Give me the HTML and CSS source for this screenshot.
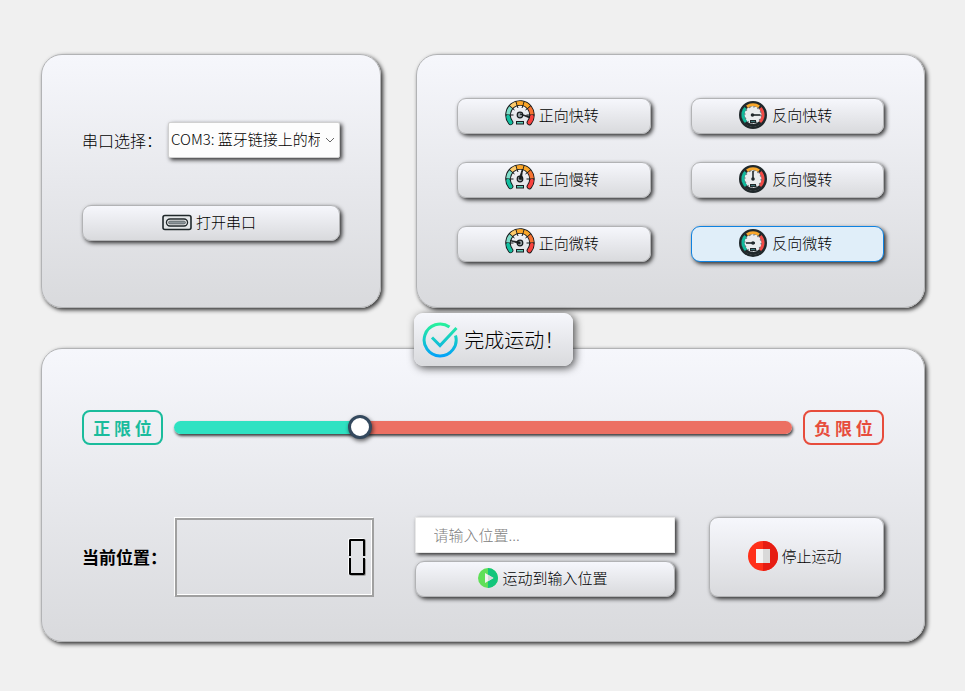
FILE: index.html
```html
<!DOCTYPE html>
<html lang="zh-CN">
<head>
<meta charset="utf-8">
<title>运动控制</title>
<link rel="stylesheet" href="styles.css">
</head>
<body>
<svg class="defs" aria-hidden="true">
  <defs>
    <g id="arc-gauge" fill="none">
      <circle cx="15" cy="15" r="12" pathLength="360" stroke="#161a1c" stroke-width="5.600" stroke-linecap="round" stroke-dasharray="256 104" transform="rotate(142 15 15)"/>
      <g transform="rotate(142 15 15)" stroke-width="3.800">
        <circle cx="15" cy="15" r="12" pathLength="360" stroke="#12bfa0" stroke-linecap="round" stroke-dasharray="30 330"/>
        <circle cx="15" cy="15" r="12" pathLength="360" stroke="#f8413e" stroke-linecap="round" stroke-dasharray="30 330" stroke-dashoffset="-226"/>
        <circle cx="15" cy="15" r="12" pathLength="360" stroke="#7edcc9" stroke-dasharray="36 324" stroke-dashoffset="-41"/>
        <circle cx="15" cy="15" r="12" pathLength="360" stroke="#fdca6b" stroke-dasharray="28 332" stroke-dashoffset="-81"/>
        <circle cx="15" cy="15" r="12" pathLength="360" stroke="#fba628" stroke-dasharray="30 330" stroke-dashoffset="-113"/>
        <circle cx="15" cy="15" r="12" pathLength="360" stroke="#fba628" stroke-dasharray="28 332" stroke-dashoffset="-147"/>
        <circle cx="15" cy="15" r="12" pathLength="360" stroke="#f67332" stroke-dasharray="36 324" stroke-dashoffset="-179"/>
      </g>
      <path d="M5 15h3.500M7.500 8.500l2 1.500M12 5.500l1 2.500M18 5.500l-1 2.500M22.500 8.500l-2 1.500M25 15h-3.500" stroke="#161a1c"/>
      <circle cx="15" cy="15" r="2.800" fill="#9aa3a7" stroke="#161a1c" stroke-width="1.200"/>
      <rect x="11.500" y="21.500" width="7" height="2.500" fill="#5fc9b5" stroke="#161a1c"/>
    </g>
    <g id="dial-gauge" fill="none">
      <circle cx="15" cy="15" r="12.800" fill="#e9ecee" stroke="#20282b" stroke-width="2.400"/>
      <circle cx="15" cy="15" r="10.400" stroke="#20282b" stroke-width="3"/>
      <path d="M8 22A10.200 10.200 0 0 1 7.600 8" stroke="#12b99c" stroke-width="3"/>
      <path d="M9 6.700A10.200 10.200 0 0 1 21 6.700" stroke="#f8a72c" stroke-width="3"/>
      <path d="M22.400 8A10.200 10.200 0 0 1 22 22" stroke="#f14b46" stroke-width="3"/>
      <circle cx="15" cy="15" r="8.200" stroke="#6b777c" stroke-width="1.300" stroke-dasharray="1.500 2.794"/>
      <rect x="12.500" y="20.500" width="5" height="2" fill="#3f777a" stroke="#20282b"/>
    </g>
    <linearGradient id="check-fill" x1="0" y1="0" x2="0" y2="36" gradientUnits="userSpaceOnUse">
      <stop offset="0" stop-color="#2af598"/>
      <stop offset="1" stop-color="#009efd"/>
    </linearGradient>
  </defs>
</svg>

<main class="page">
  <section class="panel port-panel">
    <div class="port-row">
      <label for="port">串口选择：</label>
      <div class="select-box">
        <select id="port"><option>COM3: 蓝牙链接上的标准串行</option></select>
        <svg class="chevron" viewBox="0 0 10 6" aria-hidden="true"><path d="M1 1l4 4 4-4" fill="none" stroke="#666"/></svg>
      </div>
    </div>
    <button class="btn" type="button">
      <svg class="icon" viewBox="0 0 30 30" aria-hidden="true">
        <rect x="1" y="8.500" width="28" height="14" rx="2" fill="#e4e7e9" stroke="#20282b" stroke-width="1.600"/>
        <rect x="4.500" y="12" width="21" height="7" rx="3.500" fill="#fff" stroke="#20282b" stroke-width="1.400"/>
        <rect x="6.500" y="14" width="17" height="3" rx="1.500" fill="#8b9498" stroke="#555e62" stroke-width=".8"/>
      </svg>
      <span>打开串口</span>
    </button>
  </section>

  <section class="panel turn-panel">
    <button class="btn" type="button"><svg class="icon" viewBox="0 0 30 30" aria-hidden="true"><use href="#arc-gauge"/><path d="M15 14l9.500 2.500v1.500z" fill="#161a1c" stroke="#161a1c" stroke-width=".8"/></svg><span>正向快转</span></button>
    <button class="btn" type="button"><svg class="icon" viewBox="0 0 30 30" aria-hidden="true"><use href="#dial-gauge"/><path d="M13 15h9.500" stroke="#20282b" stroke-width="1.600"/><circle cx="14.500" cy="15" r="1.800" fill="#20282b"/></svg><span>反向快转</span></button>
    <button class="btn" type="button"><svg class="icon" viewBox="0 0 30 30" aria-hidden="true"><use href="#arc-gauge"/><path d="M14 15l3.500-10-1 10.500z" fill="#161a1c" stroke="#161a1c" stroke-width=".8"/></svg><span>正向慢转</span></button>
    <button class="btn" type="button"><svg class="icon" viewBox="0 0 30 30" aria-hidden="true"><use href="#dial-gauge"/><path d="M15 16V7" stroke="#20282b" stroke-width="1.600"/><circle cx="15" cy="15" r="1.800" fill="#20282b"/></svg><span>反向慢转</span></button>
    <button class="btn" type="button"><svg class="icon" viewBox="0 0 30 30" aria-hidden="true"><use href="#arc-gauge"/><path d="M15 14L5 12.500l10 3.500z" fill="#161a1c" stroke="#161a1c" stroke-width=".8"/></svg><span>正向微转</span></button>
    <button class="btn btn-active" type="button"><svg class="icon" viewBox="0 0 30 30" aria-hidden="true"><use href="#dial-gauge"/><path d="M17 15H8" stroke="#20282b" stroke-width="1.600"/><circle cx="15" cy="15" r="1.800" fill="#20282b"/></svg><span>反向微转</span></button>
  </section>

  <section class="panel motion-panel">
    <div class="toast" role="status">
      <svg class="toast-icon" viewBox="0 0 36 36" aria-hidden="true">
        <g fill="none" stroke="url(#check-fill)" stroke-width="3">
          <path d="M33.500 13.500A16 16 0 1 1 27.500 5"/>
          <path d="M10 15.500l8 8L34.500 6"/>
        </g>
      </svg>
      <span>完成运动！</span>
    </div>

    <div class="limit-row">
      <span class="limit limit-positive">正 限 位</span>
      <input class="slider" type="range" min="0" max="1000" value="293" aria-label="位置">
      <span class="limit limit-negative">负 限 位</span>
    </div>

    <div class="position-row">
      <div class="current">
        <span class="current-label">当前位置：</span>
        <output class="lcd" aria-label="0">
          <span class="digit"><span class="digit-top"></span><span class="digit-bottom"></span></span>
        </output>
      </div>
      <div class="target">
        <input class="target-input" type="text" placeholder="请输入位置..." aria-label="请输入位置">
        <button class="btn" type="button">
          <svg class="icon icon-small" viewBox="0 0 20 20" aria-hidden="true">
            <circle cx="10" cy="10" r="10" fill="#60df58"/>
            <path d="M10 0a10 10 0 0 1 0 20z" fill="#13c57c"/>
            <path d="M7 5l8.500 5L7 15z" fill="#f2f2f2"/>
            <path d="M10 6.800l5.500 3.200-5.500 3.200z" fill="#d8d8d8"/>
          </svg>
          <span>运动到输入位置</span>
        </button>
      </div>
      <button class="btn stop" type="button">
        <svg class="icon" viewBox="0 0 30 30" aria-hidden="true">
          <circle cx="15" cy="15" r="15" fill="#ff3019"/>
          <path d="M15 0a15 15 0 0 1 0 30z" fill="#e61d13"/>
          <path d="M8 8h7v14H8z" fill="#f3f3f3"/>
          <path d="M15 8h7v14h-7z" fill="#d9d9d9"/>
        </svg>
        <span>停止运动</span>
      </button>
    </div>
  </section>
</main>
</body>
</html>
```
FILE: styles.css
```css
* {
  box-sizing: border-box;
}

body {
  margin: 0;
  background: #f0f0f0;
  color: #000;
  font: 300 15px/20px "Noto Sans CJK SC", sans-serif;
}

button,
input,
select {
  font: inherit;
  color: inherit;
}

.defs {
  position: absolute;
  width: 0;
  height: 0;
}

.page {
  display: grid;
  grid-template-columns: 340fr 509fr;
  gap: 40px 35px;
  padding: 54px 40px 48px 41px;
}

.panel {
  min-width: 0;
  padding: 40px;
  border: 1px solid #b2b3b5;
  border-radius: 21px;
  background: linear-gradient(#f6f7fc, #d9dadd);
  box-shadow: 2px 2px 4px rgba(0, 0, 0, 0.8);
}

.port-panel {
  display: flex;
  flex-direction: column;
  justify-content: center;
  gap: 47px;
  min-height: 254px;
}

.port-row {
  display: flex;
  align-items: center;
  gap: 6px;
  font-size: 16px;
}

.port-row label {
  flex: none;
}

.select-box {
  position: relative;
  flex: 1;
  min-width: 0;
  font-size: 15px;
}

.select-box select {
  display: block;
  width: 100%;
  height: 36px;
  padding: 0 19px 2px 2px;
  border: 1px solid #d0d0d0;
  border-radius: 2px;
  background: #fdfdfd;
  box-shadow: 2px 2px 4px rgba(0, 0, 0, 0.8);
  appearance: none;
  overflow: hidden;
  text-overflow: clip;
}

.chevron {
  position: absolute;
  top: 15px;
  right: 5px;
  width: 10px;
  height: 6px;
  pointer-events: none;
}

.btn {
  display: flex;
  align-items: center;
  justify-content: center;
  gap: 4px;
  width: 100%;
  height: 36px;
  padding: 0 4px 2px 0;
  border: 1px solid #b2b3b5;
  border-radius: 9px;
  background: linear-gradient(#f6f7fc, #d9dadd);
  box-shadow: 2px 2px 4px rgba(0, 0, 0, 0.8);
}

.btn-active {
  border-color: #0f82e0;
  background: #e0eef9;
}

.icon {
  flex: none;
  width: 30px;
  height: 30px;
}

.icon-small {
  width: 20px;
  height: 20px;
}

.turn-panel {
  display: grid;
  grid-template-columns: 1fr 1fr;
  align-content: center;
  gap: 28px 40px;
  padding-bottom: 42px;
}

.motion-panel {
  position: relative;
  grid-column: 1 / -1;
  padding: 61px 40px 44px;
}

.toast {
  position: absolute;
  top: -36px;
  left: 42.2%;
  display: flex;
  align-items: center;
  gap: 6px;
  height: 53px;
  padding: 0 9px 0 8px;
  border-radius: 9px;
  background: linear-gradient(#f6f7fc, #d9dadd);
  box-shadow: 2px 2px 8px rgba(0, 0, 0, 0.7);
  font-size: 20px;
  white-space: nowrap;
}

.toast-icon {
  width: 36px;
  height: 36px;
}

.limit-row {
  display: flex;
  align-items: center;
  gap: 11px;
}

.limit {
  flex: none;
  width: 81px;
  height: 35px;
  border: 2px solid;
  border-radius: 8px;
  font-size: 17px;
  font-weight: 700;
  line-height: 31px;
  text-align: center;
}

.limit-positive {
  color: #1abc9c;
}

.limit-negative {
  color: #e74c3c;
}

.slider {
  flex: 1;
  min-width: 0;
  height: 24px;
  margin: 0;
  background: none;
  appearance: none;
}

.slider::-webkit-slider-runnable-track {
  height: 13px;
  border-radius: 7px;
  background: linear-gradient(90deg, #2fe2c2 30%, #ec7063 30%);
  box-shadow: 1px 2px 3px rgba(0, 0, 0, 0.75);
}

.slider::-webkit-slider-thumb {
  width: 24px;
  height: 24px;
  margin-top: -6px;
  border: 3px solid #34495e;
  border-radius: 50%;
  background: #fff;
  box-shadow: 1px 2px 4px rgba(0, 0, 0, 0.6);
  appearance: none;
}

.position-row {
  display: flex;
  gap: 34px;
  margin-top: 72px;
}

.current {
  display: flex;
  flex: 292 1 0;
  align-items: center;
  min-width: 0;
  margin-right: 7px;
}

.current-label {
  flex: none;
  width: 93px;
  font-size: 17px;
  font-weight: 700;
}

.lcd {
  display: flex;
  flex: 1;
  align-items: center;
  justify-content: flex-end;
  height: 79px;
  padding-right: 7px;
  border: 2px solid #a0a0a0;
  box-shadow: -1px -1px 0 #fff, inset -1px -1px 0 #fff;
}

.digit {
  display: grid;
  grid-template-rows: 17px 17px;
  gap: 2px;
  width: 16px;
}

.digit-top,
.digit-bottom {
  border: 2px solid #000;
  box-shadow: -1px -1px 0 #fff, 1px 0 0 #a0a0a0;
}

.digit-top {
  border-bottom: 0;
  border-radius: 2px 2px 0 0;
}

.digit-bottom {
  border-top: 0;
  border-radius: 0 0 2px 2px;
  box-shadow: -1px 0 0 #fff, 1px 1px 0 #a0a0a0;
}

.target {
  display: flex;
  flex: 261 1 0;
  flex-direction: column;
  gap: 8px;
  min-width: 0;
}

.target-input {
  width: 100%;
  height: 36px;
  padding: 0 18px 2px;
  border: 1px solid #e8e8e8;
  background: #fff;
  box-shadow: 2px 2px 4px rgba(0, 0, 0, 0.8);
}

.target-input::placeholder {
  color: #808080;
}

.stop {
  flex: 169 1 0;
  width: auto;
  height: 80px;
}
```
